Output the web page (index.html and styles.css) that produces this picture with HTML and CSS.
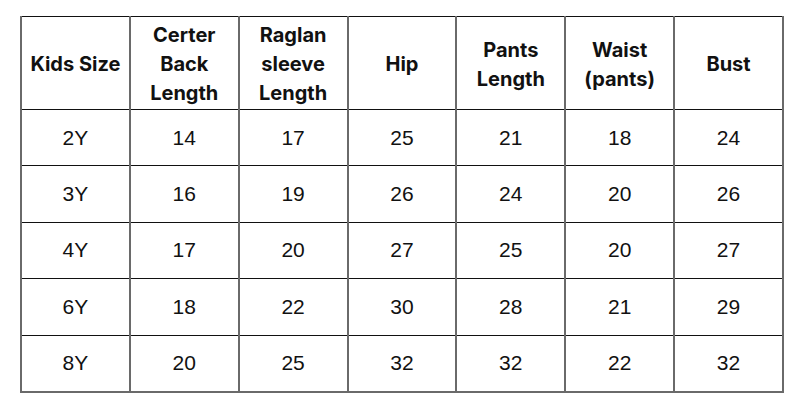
FILE: index.html
```html
<!DOCTYPE html>
<html>
<head>
<meta charset="utf-8">
<link rel="stylesheet" href="styles.css">
</head>
<body>
<table class="size-table">
  <thead>
    <tr>
      <th>Kids Size</th>
      <th>Certer<br>Back<br>Length</th>
      <th>Raglan<br>sleeve<br>Length</th>
      <th>Hip</th>
      <th>Pants<br>Length</th>
      <th>Waist<br>(pants)</th>
      <th>Bust</th>
    </tr>
  </thead>
  <tbody>
    <tr><td>2Y</td><td>14</td><td>17</td><td>25</td><td>21</td><td>18</td><td>24</td></tr>
    <tr><td>3Y</td><td>16</td><td>19</td><td>26</td><td>24</td><td>20</td><td>26</td></tr>
    <tr><td>4Y</td><td>17</td><td>20</td><td>27</td><td>25</td><td>20</td><td>27</td></tr>
    <tr><td>6Y</td><td>18</td><td>22</td><td>30</td><td>28</td><td>21</td><td>29</td></tr>
    <tr><td>8Y</td><td>20</td><td>25</td><td>32</td><td>32</td><td>22</td><td>32</td></tr>
  </tbody>
</table>
</body>
</html>
```

FILE: styles.css
```css
html, body {
  margin: 0;
  padding: 0;
  background: #ffffff;
}
body {
  padding: 16px 0 0 20px;
}
.size-table {
  border-collapse: collapse;
  table-layout: fixed;
  width: 764px;
  color: #111111;
  font-family: "Liberation Sans", Arial, sans-serif;
}
.size-table th,
.size-table td {
  border-left: 2px solid #6a6a6a;
  border-right: 2px solid #6a6a6a;
  border-top: 1px solid #111111;
  border-bottom: 1px solid #111111;
  text-align: center;
  vertical-align: middle;
  padding: 0;
}
.size-table th {
  height: 93px;
  padding-top: 3px;
  box-sizing: border-box;
  font-family: Inter, "Open Sans", sans-serif;
  font-weight: 700;
  font-size: 20px;
  line-height: 29px;
}
.size-table td {
  height: 55.4px;
  font-size: 21px;
  font-weight: 400;
}
.size-table tbody tr:last-child td {
  border-bottom: 2px solid #6a6a6a;
}
```
